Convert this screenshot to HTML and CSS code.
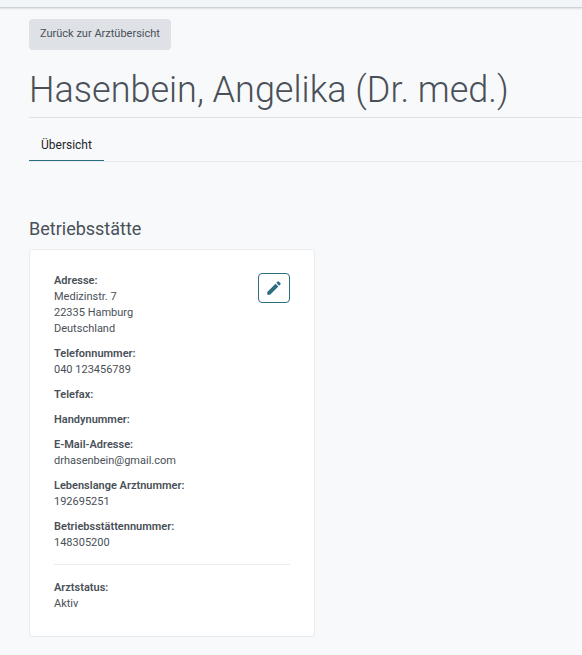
FILE: index.html
```html
<!DOCTYPE html>
<html lang="de">
  <head>
    <meta charset="UTF-8" />
    <meta name="viewport" content="width=device-width, initial-scale=1.0" />
    <title>Hasenbein, Angelika (Dr. med.)</title>
    <link rel="stylesheet" href="styles.css">
  </head>
  <body>
    <header class="topbar"></header>
    <main class="content">
      <button type="button" class="btn-back">Zurück zur Arztübersicht</button>
      <h1>Hasenbein, Angelika (Dr. med.)</h1>
      <nav class="tabs">
        <a href="#uebersicht" class="tab active">Übersicht</a>
      </nav>
      <section id="uebersicht">
        <h2>Betriebsstätte</h2>
        <div class="card">
          <div class="card-main">
            <dl class="details">
              <div>
                <dt>Adresse:</dt>
                <dd>Medizinstr. 7</dd>
                <dd>22335 Hamburg</dd>
                <dd>Deutschland</dd>
              </div>
              <div>
                <dt>Telefonnummer:</dt>
                <dd>040 123456789</dd>
              </div>
              <div>
                <dt>Telefax:</dt>
              </div>
              <div>
                <dt>Handynummer:</dt>
              </div>
              <div>
                <dt>E-Mail-Adresse:</dt>
                <dd>drhasenbein@gmail.com</dd>
              </div>
              <div>
                <dt>Lebenslange Arztnummer:</dt>
                <dd>192695251</dd>
              </div>
              <div>
                <dt>Betriebsstättennummer:</dt>
                <dd>148305200</dd>
              </div>
            </dl>
            <button type="button" class="btn-edit" aria-label="Bearbeiten">
              <svg viewBox="0 0 24 24" width="18" height="18" fill="currentColor">
                <path d="M3 17.25V21h3.75L17.81 9.94l-3.75-3.75L3 17.25zM20.71 7.04a1 1 0 0 0 0-1.41l-2.34-2.34a1 1 0 0 0-1.41 0l-1.83 1.83 3.75 3.75 1.83-1.83z" />
              </svg>
            </button>
          </div>
          <hr />
          <dl class="details">
            <div>
              <dt>Arztstatus:</dt>
              <dd>Aktiv</dd>
            </div>
          </dl>
        </div>
      </section>
    </main>
  </body>
</html>
```
FILE: styles.css
```css
* {
  box-sizing: border-box;
}
body {
  margin: 0;
  background: #f8f9fb;
  color: #495057;
  font-family: Roboto, "Liberation Sans", sans-serif;
  font-size: 11px;
  line-height: 16px;
}
.topbar {
  height: 8px;
  background: #f1f5f8;
  border-bottom: 1px solid #ced2d6;
  box-shadow: 0 1px 2px rgba(0, 0, 0, 0.1);
}
.content {
  padding: 11px 0 18px 29px;
}
button {
  font: inherit;
  cursor: pointer;
}
.btn-back {
  display: block;
  height: 31px;
  padding: 0 11px 2px;
  border: none;
  border-radius: 4px;
  background: #dee2e6;
  color: #495057;
}
h1 {
  margin: 16px 0 0;
  padding-bottom: 2px;
  border-bottom: 1px solid #dee2e6;
  font-size: 36px;
  font-weight: 300;
  line-height: 49px;
}
.tabs {
  display: flex;
  margin-top: 10px;
  border-bottom: 1px solid #e9ecef;
}
.tab {
  padding: 9px 12px 6px;
  color: #212529;
  font-size: 12px;
  line-height: 17px;
  text-decoration: none;
}
.tab.active {
  border-bottom: 1px solid #2b6e80;
}
h2 {
  margin: 56px 0 9px;
  font-size: 18px;
  font-weight: 400;
  line-height: 22px;
}
.card {
  width: 286px;
  max-width: 100%;
  padding: 23px 24px 24px;
  border: 1px solid #e9ecef;
  border-radius: 4px;
  background: #fff;
}
.card-main {
  display: flex;
  justify-content: space-between;
  align-items: flex-start;
}
.details {
  display: flex;
  flex-direction: column;
  gap: 9px;
  margin: 0;
}
.details dt {
  font-weight: 600;
}
.details dd {
  margin: 0;
}
.btn-edit {
  display: flex;
  align-items: center;
  justify-content: center;
  width: 32px;
  height: 30px;
  padding: 0;
  border: 1px solid #2b6e80;
  border-radius: 4px;
  background: #fff;
  color: #2b6e80;
}
hr {
  margin: 13px 0 15px;
  border: 0;
  border-top: 1px solid #e9ecef;
}
```
